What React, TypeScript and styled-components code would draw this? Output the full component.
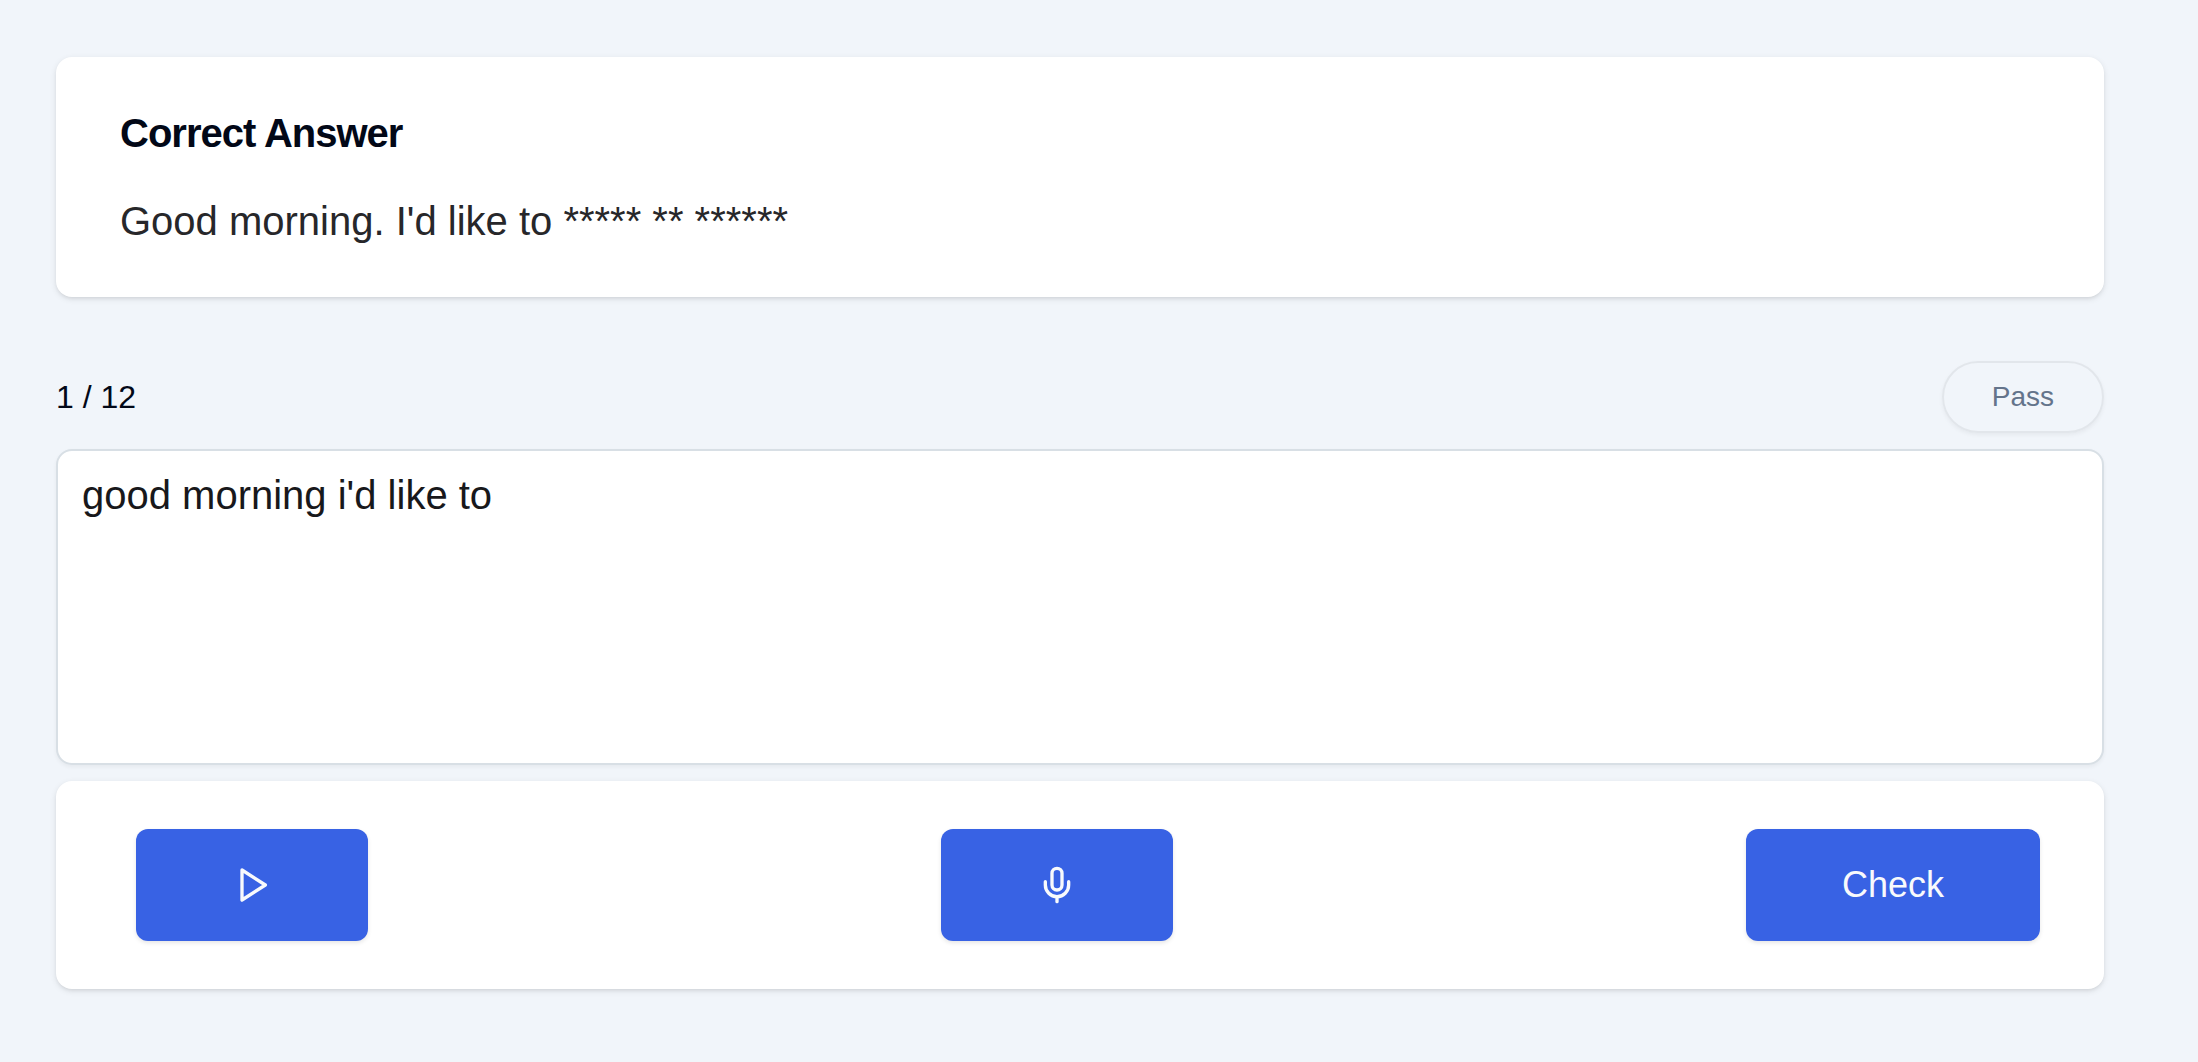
import React, { useState } from "react";
import styled, { createGlobalStyle } from "styled-components";

const GlobalStyle = createGlobalStyle`
  *, *::before, *::after { box-sizing: border-box; }
  body {
    margin: 0;
    background: #f1f5fa;
    color: #020817;
    font-family: "Liberation Sans", Arial, sans-serif;
  }
`;

const Page = styled.main`
  display: flex;
  flex-direction: column;
  gap: 16px;
  min-height: 100vh;
  padding: 57px 94px 56px 56px;
`;

const Card = styled.section`
  border-radius: 16px;
  background: #ffffff;
  box-shadow: 0 2px 6px rgba(0, 0, 0, 0.1), 0 2px 4px -2px rgba(0, 0, 0, 0.1);
`;

const AnswerCard = styled(Card)`
  display: flex;
  flex-direction: column;
  gap: 40px;
  margin-bottom: 48px;
  padding: 56px 64px 48px;
`;

const Title = styled.h3`
  margin: 0;
  font-size: 40px;
  line-height: 40px;
  font-weight: 700;
  letter-spacing: -1px;
`;

const Answer = styled.p`
  margin: 0;
  color: #27272a;
  font-size: 40px;
  line-height: 56px;
`;

const StatusRow = styled.div`
  display: flex;
  align-items: center;
  justify-content: space-between;
`;

const Counter = styled.span`
  font-size: 32px;
  line-height: 48px;
`;

const PassButton = styled.button`
  height: 72px;
  padding: 0 48px;
  border: 2px solid #e2e6eb;
  border-radius: 36px;
  background: transparent;
  box-shadow: 0 2px 4px rgba(0, 0, 0, 0.05);
  color: #64748b;
  font-family: inherit;
  font-size: 28px;
  line-height: 40px;
  cursor: pointer;
`;

const AnswerInput = styled.textarea`
  display: block;
  width: 100%;
  height: 316px;
  padding: 16px 24px;
  border: 2px solid #d8dfe5;
  border-radius: 16px;
  outline: none;
  resize: none;
  background: #ffffff;
  box-shadow: 0 2px 4px rgba(0, 0, 0, 0.05);
  color: #18181b;
  font-family: inherit;
  font-size: 40px;
  line-height: 56px;
`;

const Controls = styled(Card)`
  display: flex;
  align-items: center;
  justify-content: space-between;
  padding: 48px 64px 48px 80px;
`;

const ActionButton = styled.button`
  display: inline-flex;
  align-items: center;
  justify-content: center;
  height: 112px;
  padding: 0 96px;
  border: 0;
  border-radius: 12px;
  background: #3862e4;
  box-shadow: 0 2px 4px rgba(0, 0, 0, 0.1);
  color: #f8fafc;
  font-family: inherit;
  font-size: 36px;
  line-height: 56px;
  cursor: pointer;
`;

const Icon = styled.svg.attrs({ viewBox: "0 0 24 24", "aria-hidden": true })`
  width: 40px;
  height: 40px;
  fill: none;
  stroke: currentColor;
  stroke-width: 2;
  stroke-linecap: round;
  stroke-linejoin: round;
`;

export default function App() {
  const [text, setText] = useState("good morning i'd like to");

  return (
    <>
      <GlobalStyle />
      <Page>
        <AnswerCard>
          <Title>Correct Answer</Title>
          <Answer>Good morning. I'd like to ***** ** ******</Answer>
        </AnswerCard>
        <StatusRow>
          <Counter>1 / 12</Counter>
          <PassButton type="button">Pass</PassButton>
        </StatusRow>
        <AnswerInput
          aria-label="Your answer"
          spellCheck={false}
          value={text}
          onChange={(event) => setText(event.target.value)}
        />
        <Controls>
          <ActionButton type="button" aria-label="Play">
            <Icon>
              <polygon points="6 3 20 12 6 21 6 3" />
            </Icon>
          </ActionButton>
          <ActionButton type="button" aria-label="Record">
            <Icon>
              <rect x="9" y="2" width="6" height="13" rx="3" />
              <path d="M19 10v2a7 7 0 0 1-14 0v-2" />
              <path d="M12 19v3" />
            </Icon>
          </ActionButton>
          <ActionButton type="button">Check</ActionButton>
        </Controls>
      </Page>
    </>
  );
}
